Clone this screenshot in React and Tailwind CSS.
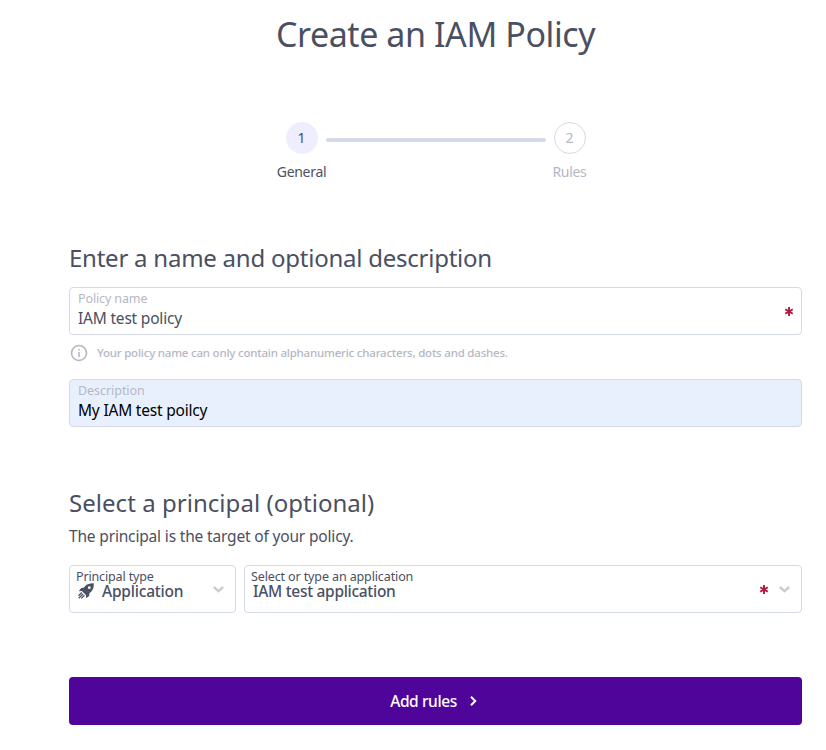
import React from "react";

function Rocket() {
  return (
    <svg className="h-4 w-4 shrink-0" viewBox="0 0 16 16">
      <path
        fillRule="evenodd"
        fill="currentColor"
        d="M15.8.2C12 .1 9.2 .9 7 3.2L5.7 4.8 3.2 4.9.8 8.2l3.1-.1 4.2 4.2-.1 3 3.2-2.4.2-2.7 1.5-1.3C15.1 6.6 16 4 15.8.2ZM11.3 3.3a1.4 1.4 0 1 1 0 2.8 1.4 1.4 0 0 1 0-2.8Z"
      />
      <path fill="none" stroke="currentColor" strokeWidth="1.3" d="M3.8 9.5.5 12.8M5.1 10.9.7 15.3M6.5 12.2 3.3 15.4" />
    </svg>
  );
}

function Chevron() {
  return (
    <svg className="h-[7px] w-[11px] shrink-0" viewBox="0 0 11 7" fill="none" stroke="#cccccc" strokeWidth="2.4">
      <path d="M0.8 1 5.5 5.2 10.2 1" />
    </svg>
  );
}

function Required() {
  return (
    <svg className="h-[9px] w-[8px] shrink-0" viewBox="0 0 8 9" stroke="#b3173e" strokeWidth="1.9">
      <path d="M4 0v9M.2 2.4l7.6 4.2M7.8 2.4.2 6.6" />
    </svg>
  );
}

export default function App() {
  return (
    <main className="h-[750px] w-[826px] overflow-hidden bg-white pl-[69px] pr-6 font-['Noto_Sans',sans-serif] text-[#4a4f62]">
      <h1 className="mt-[10px] whitespace-nowrap text-center text-[34px] leading-12 tracking-[-0.42px]">Create an IAM Policy</h1>

      <div className="mt-16 flex justify-center">
        <div className="flex w-12 flex-col items-center">
          <span className="flex size-8 items-center justify-center rounded-full bg-[#eeeeff] pb-px text-[14px]">1</span>
          <span className="mt-2 whitespace-nowrap text-[14px] leading-5 tracking-[-0.3px]">General</span>
        </div>
        <div className="mt-4 h-1 w-[220px] rounded-sm bg-[#d4dae7]" />
        <div className="flex w-12 flex-col items-center text-[#b5b7c4]">
          <span className="flex size-8 items-center justify-center rounded-full border border-[#d4dae7] pb-px text-[14px]">2</span>
          <span className="mt-2 whitespace-nowrap text-[14px] leading-5 tracking-[-0.3px]">Rules</span>
        </div>
      </div>

      <h2 className="mt-[60px] whitespace-nowrap text-[24px] leading-8 tracking-[-0.24px]">Enter a name and optional description</h2>
      <div className="mt-[13px] flex h-12 items-center justify-between rounded border border-[#d4dae7] px-2">
        <div className="-mt-[3px] whitespace-nowrap">
          <div className="text-[12.5px] leading-4 tracking-[-0.12px] text-[#b5b7c4]">Policy name</div>
          <div className="mt-px text-[15.5px] leading-5 tracking-[-0.2px]">IAM test policy</div>
        </div>
        <Required />
      </div>
      <div className="mt-[9px] flex h-[18px] items-center gap-[9px] pl-[1px] text-[#b5b7c4]">
        <svg className="size-[18px]" viewBox="0 0 18 18" fill="none" stroke="currentColor" strokeWidth="1.6">
          <circle cx="9" cy="9" r="7.5" />
          <path d="M9 8v5M9 5v1.5" />
        </svg>
        <span className="whitespace-nowrap text-[11.5px] font-medium leading-4 tracking-[-0.21px]">Your policy name can only contain alphanumeric characters, dots and dashes.</span>
      </div>
      <div className="mt-[17px] flex h-12 items-center rounded border border-[#d4dae7] bg-[#e8f0fe] px-2">
        <div className="-mt-[3px] whitespace-nowrap">
          <div className="text-[12.5px] leading-4 tracking-[-0.05px] text-[#b5b7c4]">Description</div>
          <div className="mt-px text-[15.5px] leading-5 tracking-[-0.2px] text-black">My IAM test poilcy</div>
        </div>
      </div>

      <h2 className="mt-[60px] whitespace-nowrap text-[24px] leading-8 tracking-[0.04px]">Select a principal (optional)</h2>
      <p className="mt-[5px] whitespace-nowrap text-[15.5px] leading-6 tracking-[-0.17px]">The principal is the target of your policy.</p>
      <div className="mt-[17px] flex gap-2">
        <div className="flex h-12 w-[167px] items-center justify-between rounded border border-[#d4dae7] pl-1.5 pr-[11px]">
          <div className="-mt-2 whitespace-nowrap">
            <div className="text-[12.5px] leading-3 tracking-[-0.14px]">Principal type</div>
            <div className="flex items-center gap-2 text-[15.5px] font-medium leading-4 tracking-[-0.2px]">
              <span className="pl-0.5"><Rocket /></span>
              <span>Application</span>
            </div>
          </div>
          <Chevron />
        </div>
        <div className="flex h-12 flex-1 items-center rounded border border-[#d4dae7] pl-1.5 pr-[11px]">
          <div className="-mt-2 flex-1 whitespace-nowrap">
            <div className="text-[12.5px] leading-3 tracking-[-0.12px]">Select or type an application</div>
            <div className="pl-0.5 text-[15.5px] font-medium leading-4 tracking-[-0.3px]">IAM test application</div>
          </div>
          <div className="flex items-center gap-[11px]">
            <Required />
            <Chevron />
          </div>
        </div>
      </div>

      <button className="mt-16 flex h-12 w-full items-center justify-center rounded bg-[#4f0599] pr-1 text-[15.5px] font-medium tracking-[-0.4px] text-white">
        <span className="whitespace-nowrap pt-0.5">Add rules</span>
        <svg className="ml-[13px] h-[10px] w-[7px]" viewBox="0 0 7 10" fill="none" stroke="currentColor" strokeWidth="2">
          <path d="M1 .8 5.2 5 1 9.2" />
        </svg>
      </button>
    </main>
  );
}
